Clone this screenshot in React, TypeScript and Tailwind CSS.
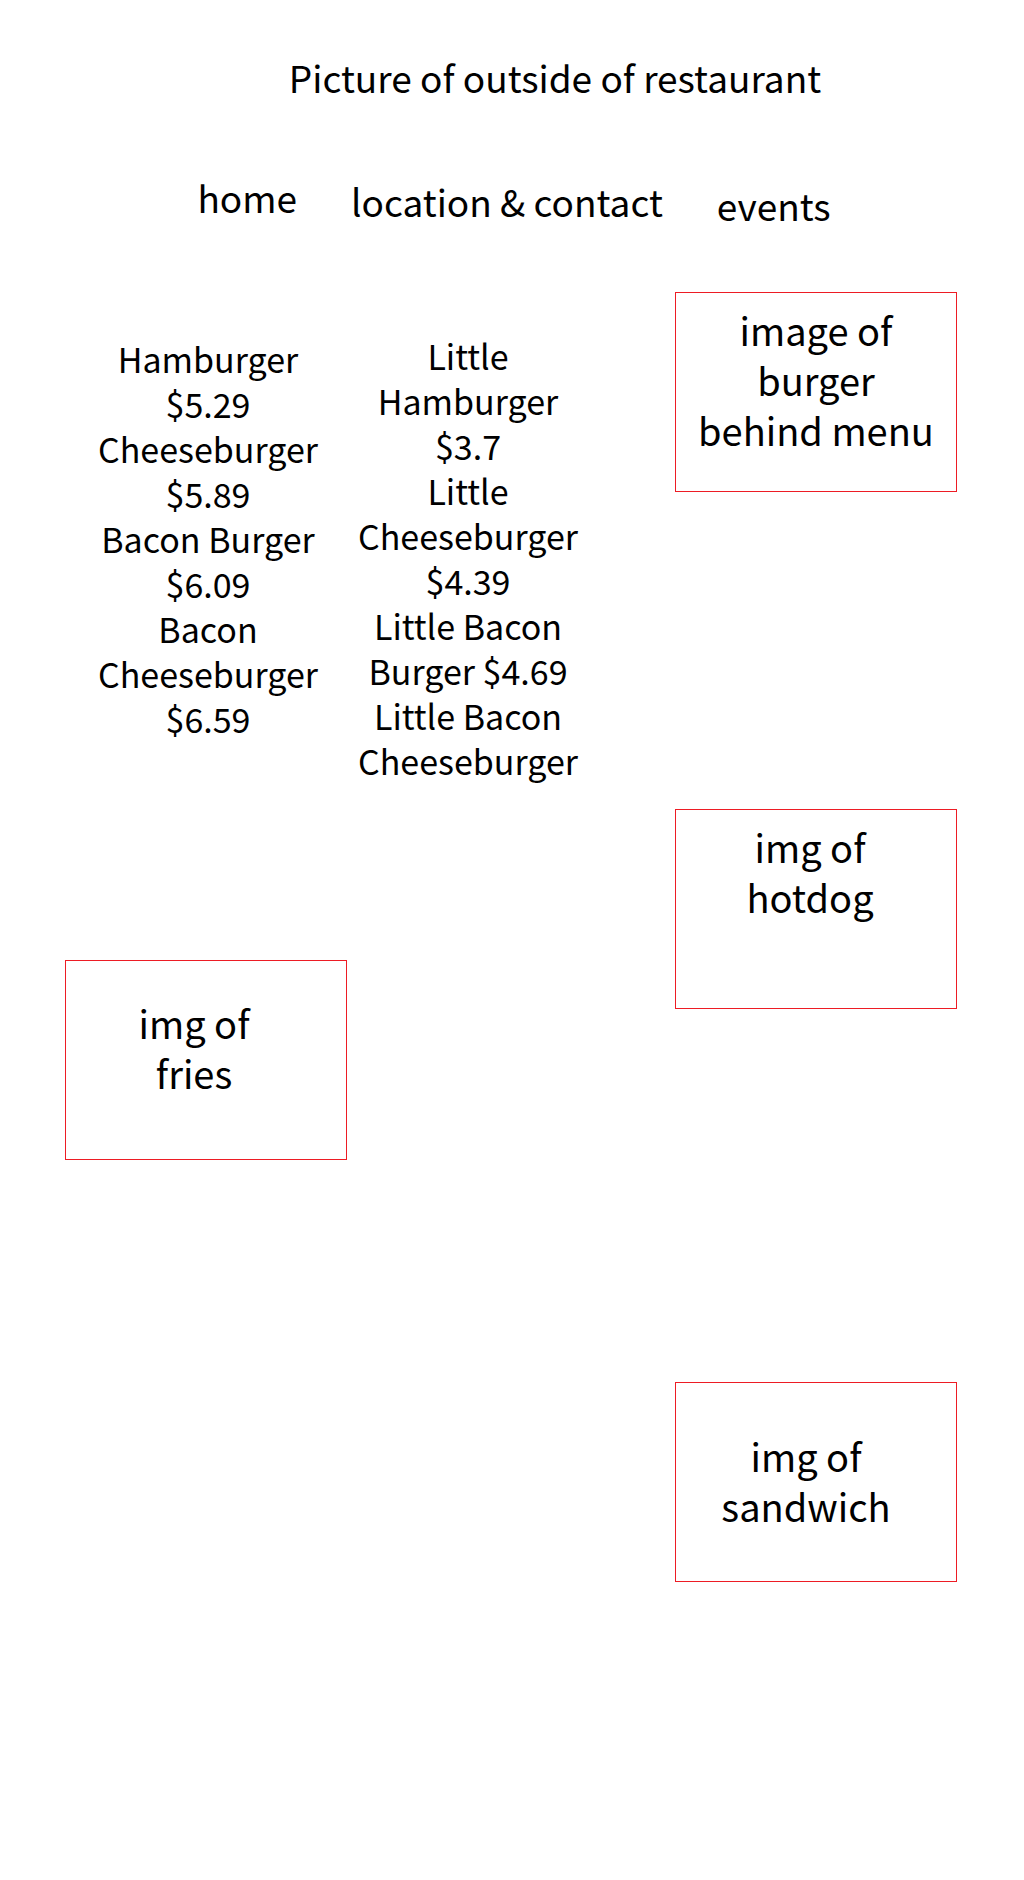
const burgers = [
  ["Hamburger", "$5.29"],
  ["Cheeseburger", "$5.89"],
  ["Bacon Burger", "$6.09"],
  ["Bacon", "Cheeseburger", "$6.59"],
];

const littleBurgers = [
  ["Little", "Hamburger", "$3.7"],
  ["Little", "Cheeseburger", "$4.39"],
  ["Little Bacon", "Burger $4.69"],
  ["Little Bacon", "Cheeseburger"],
];

function MenuList({ items, className }: { items: string[][]; className: string }) {
  return (
    <ul className={`text-center text-[34px] leading-[45px] whitespace-nowrap ${className}`}>
      {items.map((lines) => (
        <li key={lines.join(" ")}>
          {lines.map((line) => (
            <span key={line} className="block">
              {line}
            </span>
          ))}
        </li>
      ))}
    </ul>
  );
}

function ImageBox({ lines, className }: { lines: string[]; className: string }) {
  return (
    <figure className={`min-h-[200px] border border-[#ed1c24] text-center whitespace-nowrap ${className}`}>
      <figcaption>
        {lines.map((line) => (
          <span key={line} className="block">
            {line}
          </span>
        ))}
      </figcaption>
    </figure>
  );
}

export default function App() {
  return (
    <div className="min-h-screen bg-white pb-16 font-['Noto_Sans_CJK_SC',sans-serif] text-[38px] leading-[50px] text-black">
      <header className="pt-[52px] text-[37px] leading-[50px]">
        <h1 className="pl-[86px] text-center">Picture of outside of restaurant</h1>
        <nav className="mt-[70px] flex items-start justify-center gap-[54px] pl-1">
          <a href="#home">home</a>
          <a href="#location" className="pt-1">location &amp; contact</a>
          <a href="#events" className="pt-2">events</a>
        </nav>
      </header>

      <main className="mt-[62px] grid grid-cols-[610fr_282fr] items-start pr-[67px] pl-[65px]">
        <div className="grid grid-cols-[282fr_242fr_86fr] items-start">
          <MenuList items={burgers} className="pt-11 pl-1" />
          <MenuList items={littleBurgers} className="pt-[41px]" />
          <ImageBox lines={["img of", "fries"]} className="col-start-1 mt-[177px] pt-[37px] pr-6" />
        </div>
        <div className="flex flex-col">
          <ImageBox lines={["image of", "burger", "behind menu"]} className="pt-3" />
          <ImageBox lines={["img of", "hotdog"]} className="mt-[317px] pt-3 pr-3" />
          <ImageBox lines={["img of", "sandwich"]} className="mt-[373px] pt-12 pr-5" />
        </div>
      </main>
    </div>
  );
}
